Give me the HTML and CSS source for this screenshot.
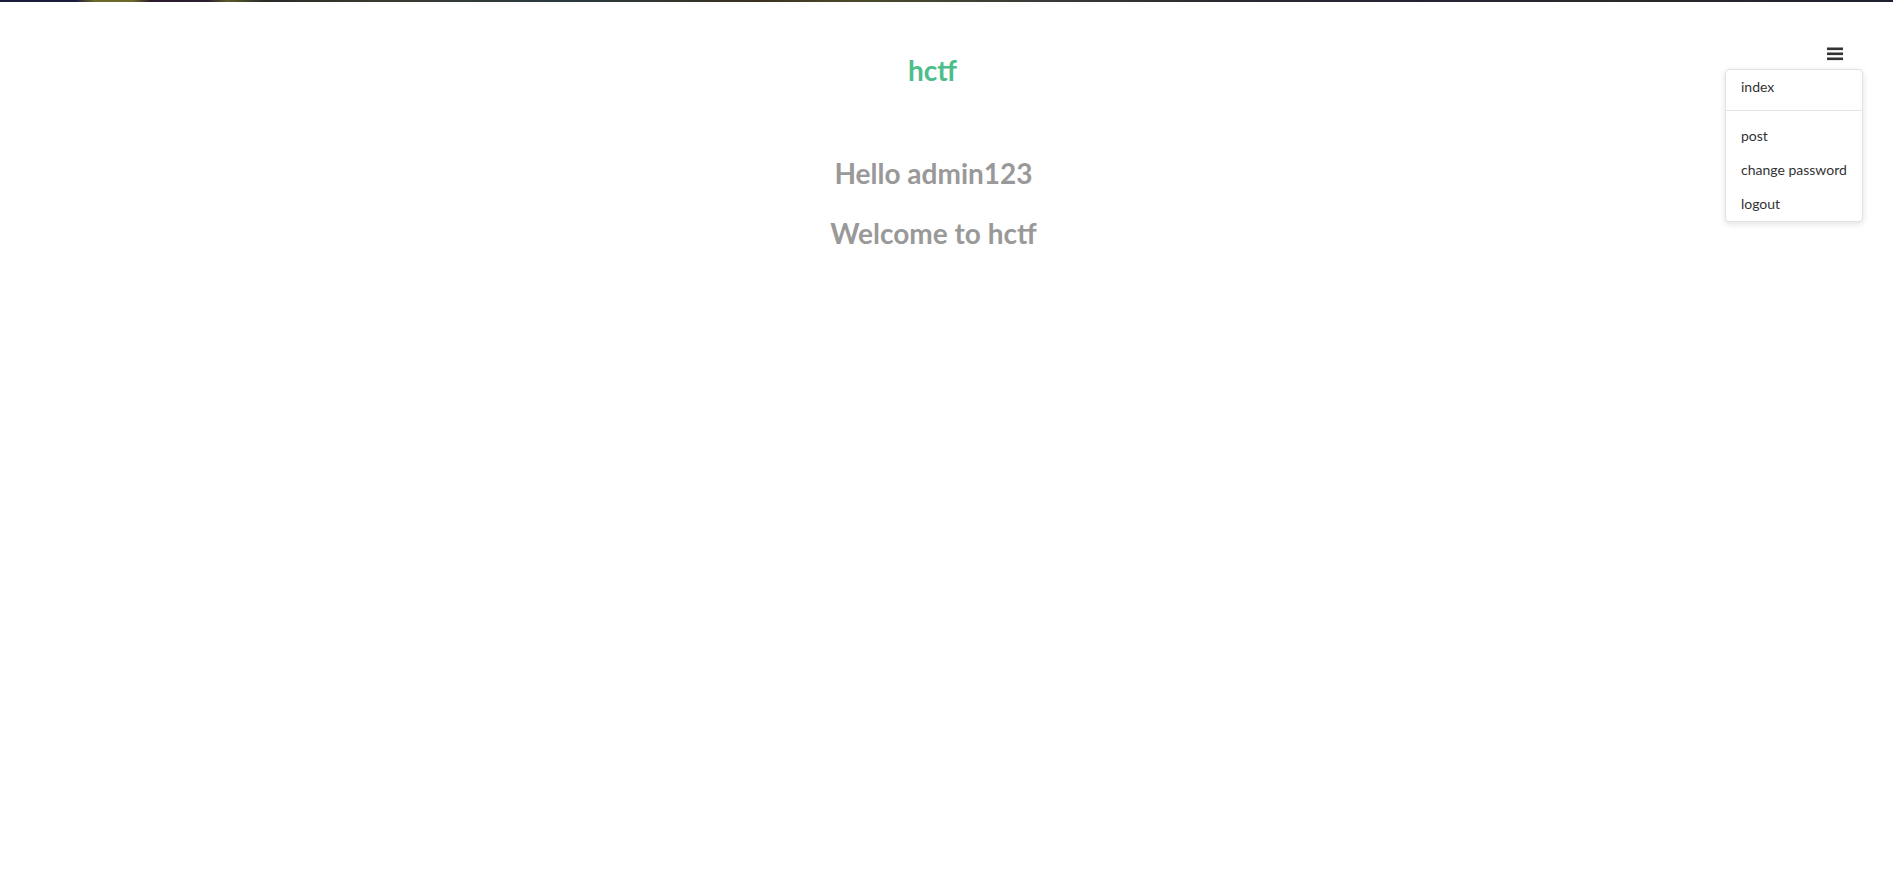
FILE: index.html
```html
<!DOCTYPE html>
<html lang="en">
<head>
<meta charset="utf-8">
<title>hctf</title>
<link rel="stylesheet" href="styles.css">
</head>
<body>
<div class="topbar"></div>
<header class="header">
  <div class="spacer"></div>
  <a class="brand" href="#">hctf</a>
  <div class="nav">
    <button class="toggle" aria-label="menu">
      <svg width="16" height="14" viewBox="0 0 16 14"><rect x="0" y="0.5" width="16" height="2.6" fill="#333"/><rect x="0" y="5.5" width="16" height="2.6" fill="#333"/><rect x="0" y="10.5" width="16" height="2.6" fill="#333"/></svg>
    </button>
    <ul class="dropdown">
      <li><a href="#">index</a></li>
      <li class="divider"></li>
      <li><a href="#">post</a></li>
      <li><a href="#">change password</a></li>
      <li><a href="#">logout</a></li>
    </ul>
  </div>
</header>
<main class="main">
  <h2 class="greet">Hello admin123</h2>
  <h2 class="greet">Welcome to hctf</h2>
</main>
</body>
</html>
```
FILE: styles.css
```css
html, body {
  margin: 0;
  padding: 0;
  background: #fff;
}
body {
  font-family: Lato, "Open Sans", "Liberation Sans", sans-serif;
  color: #333;
}
.topbar {
  height: 2px;
  background: linear-gradient(90deg, #1a1a3a 0%, #1c1c40 4%, #6b6a2a 5%, #6b6a2a 7%, #2a1a2c 8%, #2c2030 11%, #5a5a2a 12%, #2a2a28 14%, #3a3a30 20%, #2a3a40 30%, #3a3020 40%, #4a4a2a 45%, #3a3a38 55%, #2a2a30 65%, #262236 75%, #2a2a2a 85%, #1e2030 100%);
}
.header {
  display: grid;
  grid-template-columns: 1fr auto 1fr;
  align-items: start;
  position: relative;
}
.brand {
  grid-column: 2;
  margin-top: 53px;
  padding-right: 28px;
  font-size: 28px;
  line-height: 30px;
  font-weight: 700;
  color: #4dbd8c;
  text-decoration: none;
}
.nav {
  grid-column: 3;
  justify-self: end;
  margin-right: 50px;
  margin-top: 45px;
}
.toggle {
  display: block;
  border: 0;
  padding: 0;
  margin: 0;
  background: none;
  width: 16px;
  height: 14px;
  cursor: pointer;
}
.toggle svg {
  display: block;
}
.dropdown {
  position: absolute;
  top: 67px;
  right: 30px;
  width: 136px;
  margin: 0;
  padding: 0;
  list-style: none;
  background: #fff;
  border: 1px solid #e2e2e2;
  border-radius: 4px;
  box-shadow: 0 2px 6px rgba(0, 0, 0, 0.12);
}
.dropdown li a {
  display: block;
  padding: 0 15px;
  height: 34px;
  line-height: 34px;
  font-size: 14px;
  color: #333;
  text-decoration: none;
  white-space: nowrap;
}
.dropdown .divider {
  height: 1px;
  margin: 6px 0 8px;
  background: #e5e5e5;
}
.main {
  display: flex;
  flex-direction: column;
  align-items: center;
  gap: 24px;
  margin-top: 70px;
  padding-right: 26px;
}
.greet {
  margin: 0;
  font-size: 28px;
  line-height: 36px;
  font-weight: 700;
  color: #999;
}
```
